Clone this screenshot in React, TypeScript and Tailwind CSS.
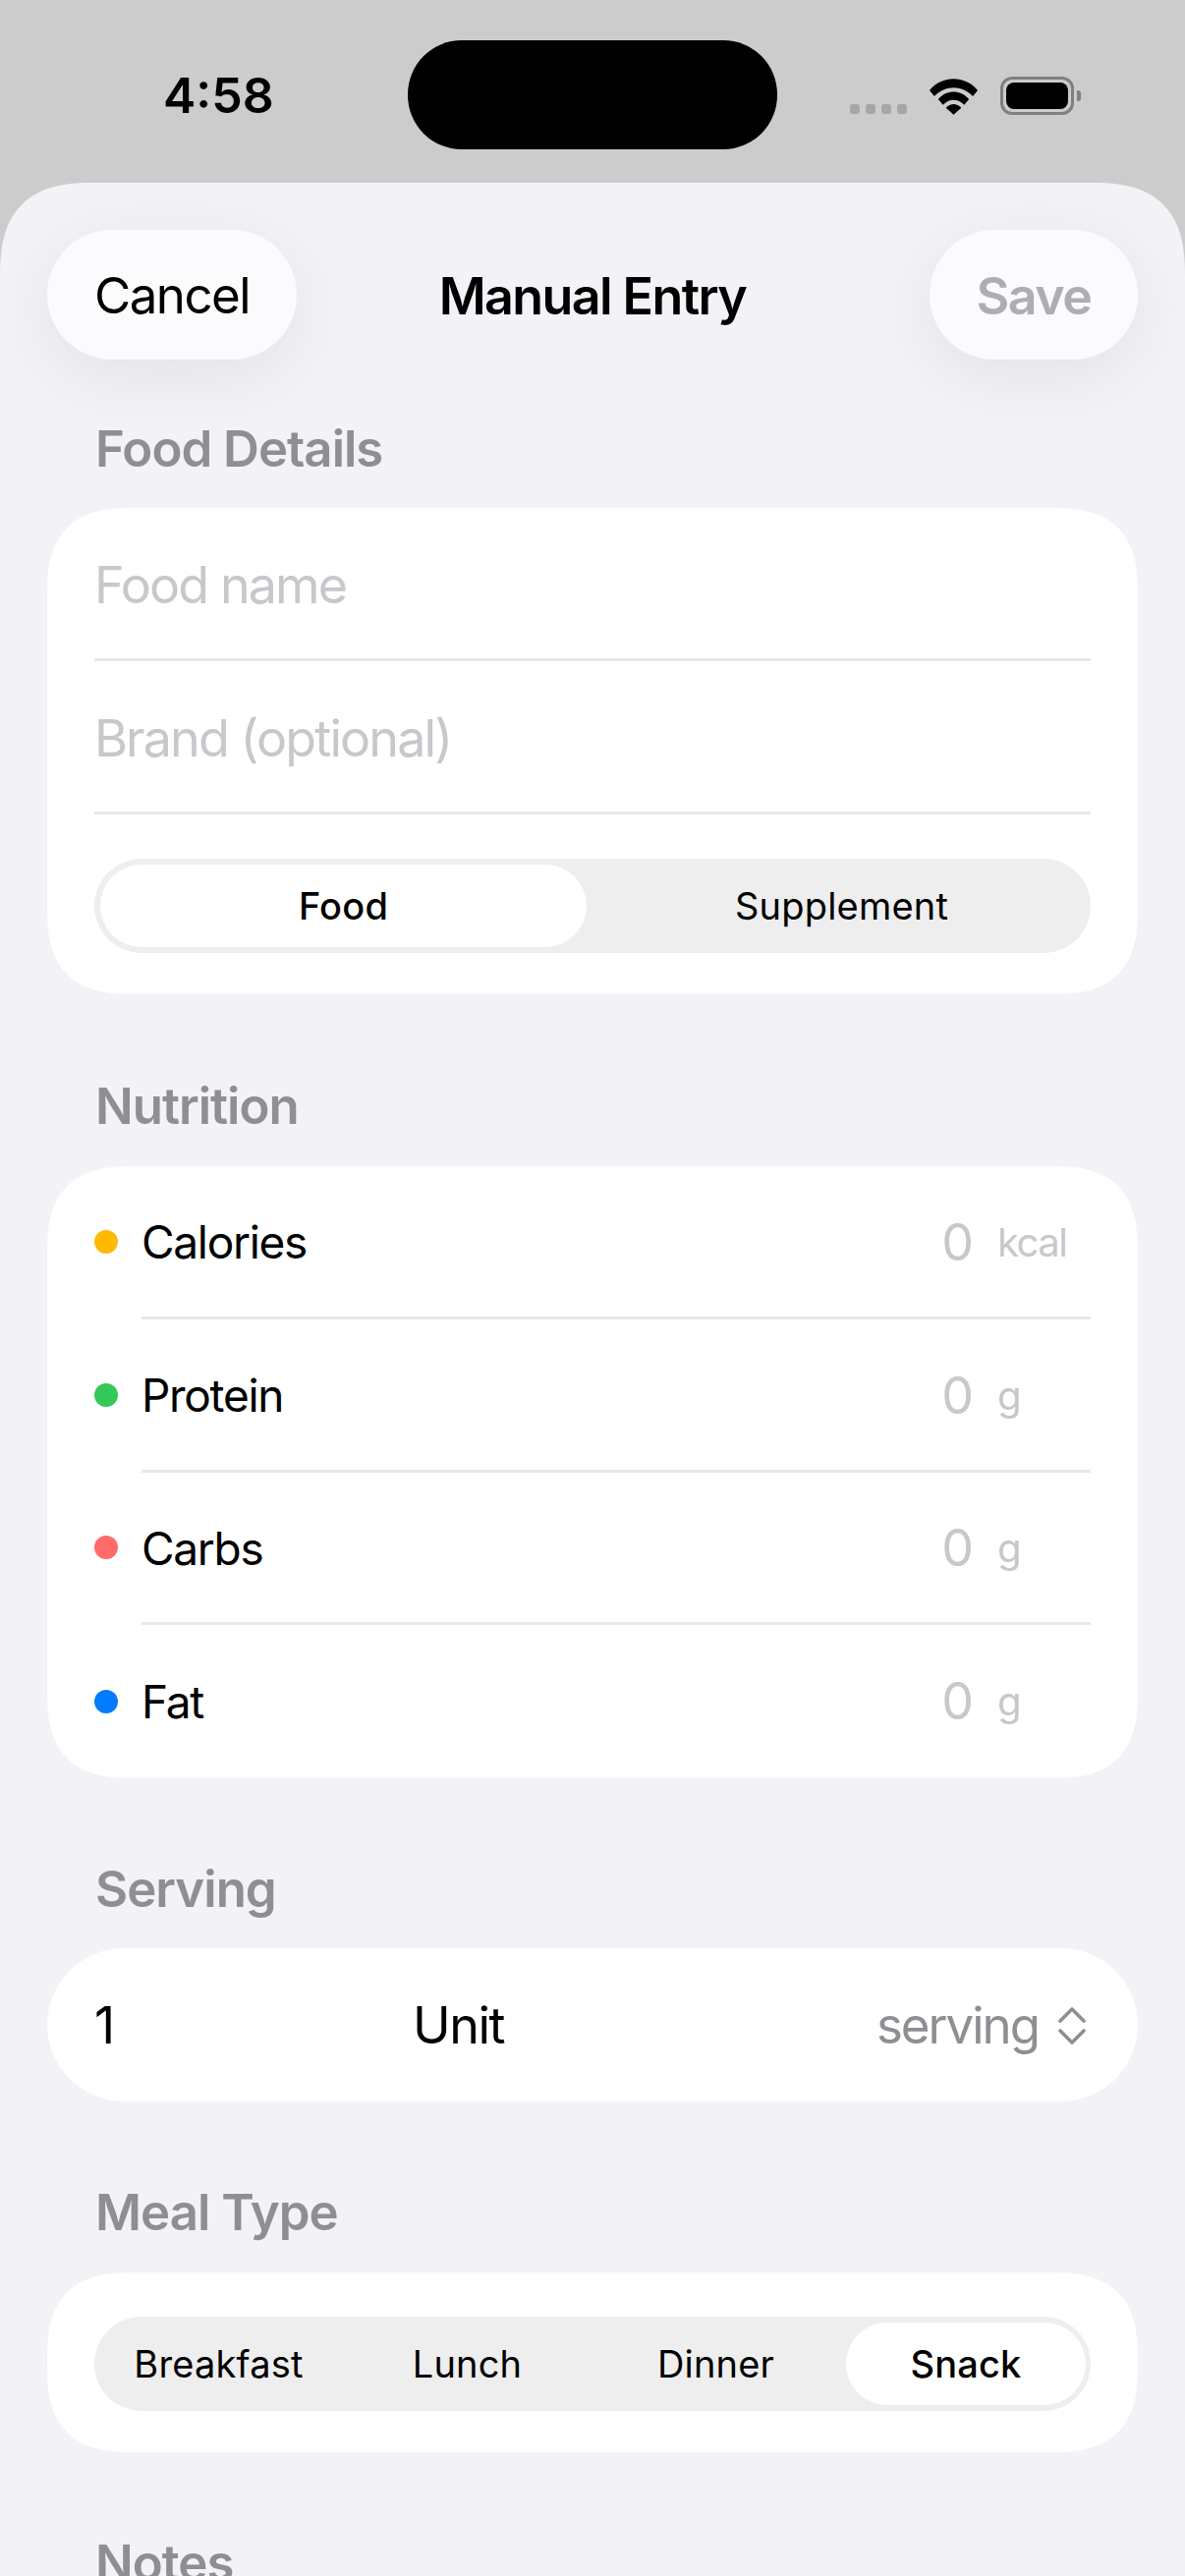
const font = "font-['Inter','Liberation_Sans',sans-serif]";

const SectionLabel = ({ children, className = "" }: { children: string; className?: string }) => (
  <h2 className={`px-[97px] text-[51px] leading-[62px] font-semibold tracking-[-1px] text-[#8e8e93] ${className}`}>
    {children}
  </h2>
);

const StatusBar = () => (
  <div className="relative flex h-[186px] items-start justify-between bg-[#cccccc]">
    <span className="mt-[64px] ml-[166px] text-[50px] leading-[66px] font-semibold text-black">4:58</span>
    <div className="absolute top-[41px] left-[415px] h-[111px] w-[376px] rounded-[55px] bg-black"></div>
    <div className="mt-[78px] mr-[106px] flex items-start">
      <div className="mt-[28px] flex gap-[6px]">
        <span className="h-[10px] w-[10px] rounded-[3px] bg-[#a6a6a6]"></span>
        <span className="h-[10px] w-[10px] rounded-[3px] bg-[#a6a6a6]"></span>
        <span className="h-[10px] w-[10px] rounded-[3px] bg-[#a6a6a6]"></span>
        <span className="h-[10px] w-[10px] rounded-[3px] bg-[#a6a6a6]"></span>
      </div>
      <svg className="mt-[1px] ml-[22px]" width="51" height="38" viewBox="0 0 52 38">
        <path d="M1 13 C14 -3 38 -3 51 13 L46 19 C35 7 17 7 6 19 Z" fill="#000" />
        <path d="M10 22 C19 12 33 12 42 22 L37 28 C31 21 21 21 15 28 Z" fill="#000" />
        <path d="M18 31 C23 26 29 26 34 31 L26 38 Z" fill="#000" />
      </svg>
      <div className="ml-[22px] flex items-center">
        <div className="h-[39px] w-[75px] rounded-[12px] border-[3px] border-[#7f7f7f] p-[3px]">
          <div className="h-full w-full rounded-[8px] bg-black"></div>
        </div>
        <div className="ml-[3px] h-[11px] w-[4px] rounded-r-[3px] bg-[#7f7f7f]"></div>
      </div>
    </div>
  </div>
);

const Header = () => (
  <div className="grid h-[132px] grid-cols-[1fr_auto_1fr] items-center px-[48px]">
    <button className="flex h-[132px] w-[254px] items-center justify-center rounded-[66px] bg-[#fbfbfe] pt-[3px] text-[51px] tracking-[-1.5px] text-black shadow-[0_16px_72px_rgba(0,0,0,0.07)]">
      Cancel
    </button>
    <h1 className="pt-[3px] text-[52px] font-semibold tracking-[-1.6px] text-black">Manual Entry</h1>
    <button className="flex h-[132px] w-[212px] items-center justify-center justify-self-end rounded-[66px] bg-[#fbfbfe] pt-[3px] text-[52px] font-semibold tracking-[-1.5px] text-[#aeaeb2] shadow-[0_16px_72px_rgba(0,0,0,0.07)]">
      Save
    </button>
  </div>
);

const TextRow = ({ placeholder }: { placeholder: string }) => (
  <div className="flex h-[156px] items-center border-b-[3px] border-[#e8e8ea] pt-[4px] text-[52px] tracking-[-1.9px] text-[#c7c7cc]">
    {placeholder}
  </div>
);

const NutritionRow = ({ dot, name, unit, last }: { dot: string; name: string; unit: string; last?: boolean }) => (
  <div className="flex items-center">
    <span className={`h-[24px] w-[24px] rounded-full ${dot} ${last ? "" : "-mt-[2px]"}`}></span>
    <div
      className={`ml-[24px] flex h-[155.75px] flex-1 items-center justify-between text-[46px] tracking-[-1.3px] text-black ${
        last ? "" : "border-b-[3px] border-[#e8e8ea] pt-[3px]"
      }`}
    >
      <span>{name}</span>
      <div className="flex items-center">
        <span className="text-[52px] tracking-normal text-[#c7c7cc]">0</span>
        <span className="ml-[24px] w-[95px] text-[40px] tracking-[-1.5px] text-[#c7c7cc]">{unit}</span>
      </div>
    </div>
  </div>
);

const App = () => {
  return (
    <div className={`h-[2622px] w-[1206px] overflow-hidden bg-[#cccccc] ${font}`}>
      <StatusBar />
      <div className="h-[2436px] rounded-t-[96px] bg-[#f2f2f7] pt-[48px] [corner-shape:superellipse(1.4)]">
        <Header />
        <SectionLabel className="mt-[60px]">Food Details</SectionLabel>
        <section className="mx-[48px] mt-[29px] h-[495px] rounded-[88px] bg-white px-[48px] [corner-shape:superellipse(1.4)]">
          <TextRow placeholder="Food name" />
          <TextRow placeholder="Brand (optional)" />
          <div className="mt-[45px] grid h-[96px] grid-cols-[495px_1fr] rounded-[48px] bg-[#eeeeee] p-[6px] text-[38px] tracking-[0.2px] text-black">
            <div className="flex items-center justify-center rounded-[42px] bg-white font-[550]">Food</div>
            <div className="flex items-center justify-center pl-[12px]">Supplement</div>
          </div>
        </section>
        <SectionLabel className="mt-[83px]">Nutrition</SectionLabel>
        <section className="mx-[48px] mt-[30px] rounded-[88px] bg-white px-[48px] [corner-shape:superellipse(1.4)]">
          <NutritionRow dot="bg-[#ffb900]" name="Calories" unit="kcal" />
          <NutritionRow dot="bg-[#34c759]" name="Protein" unit="g" />
          <NutritionRow dot="bg-[#ff6b6b]" name="Carbs" unit="g" />
          <NutritionRow dot="bg-[#007aff]" name="Fat" unit="g" last />
        </section>
        <SectionLabel className="mt-[82px]">Serving</SectionLabel>
        <section className="mx-[48px] mt-[29px] flex h-[156px] items-center rounded-[78px] bg-white px-[48px] pt-[2px] text-[52px] tracking-[-1.5px] text-black">
          <span className="w-[324px]">1</span>
          <span>Unit</span>
          <div className="ml-auto flex items-center text-[51px] tracking-[-2px] text-[#8e8e93]">
            <span>serving</span>
            <svg className="mr-[5px] ml-[20px]" width="28" height="40" viewBox="0 0 28 40" fill="none">
              <path d="M2 15 L14 3 L26 15" stroke="#8e8e93" strokeWidth="3.6" strokeLinecap="round" strokeLinejoin="round" />
              <path d="M2 25 L14 37 L26 25" stroke="#8e8e93" strokeWidth="3.6" strokeLinecap="round" strokeLinejoin="round" />
            </svg>
          </div>
        </section>
        <SectionLabel className="mt-[82px]">Meal Type</SectionLabel>
        <section className="mx-[48px] mt-[30px] h-[183px] rounded-[88px] bg-white px-[48px] pt-[45px] [corner-shape:superellipse(1.4)]">
          <div className="grid h-[96px] grid-cols-[253px_253px_253px_1fr] rounded-[48px] bg-[#eeeeee] py-[6px] pr-[5px] text-[38px] tracking-[0.2px] text-black">
            <div className="flex items-center justify-center">Breakfast</div>
            <div className="flex items-center justify-center">Lunch</div>
            <div className="flex items-center justify-center">Dinner</div>
            <div className="ml-[6px] flex items-center justify-center rounded-[42px] bg-white font-[550]">Snack</div>
          </div>
        </section>
        <SectionLabel className="mt-[82px]">Notes</SectionLabel>
      </div>
    </div>
  );
};

export default App;
